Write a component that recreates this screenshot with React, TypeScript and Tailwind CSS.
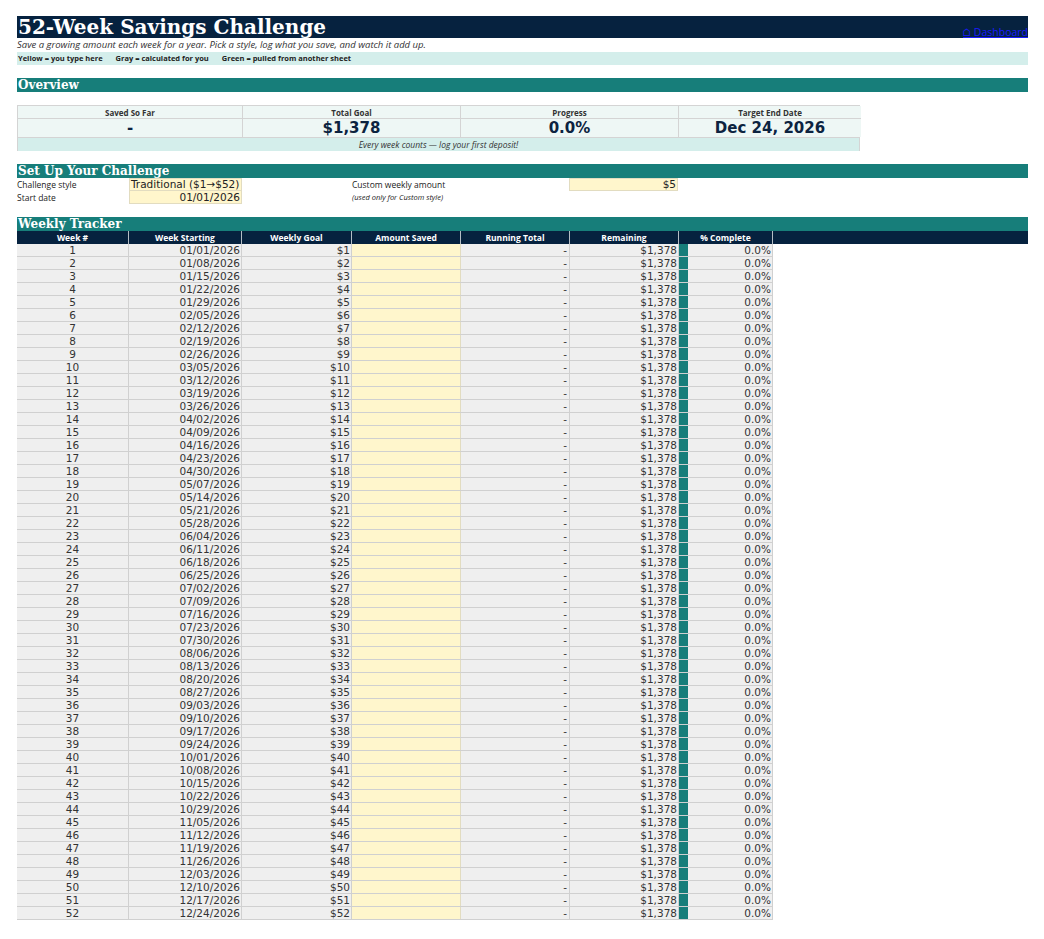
const weekStarts = (() => {
  const out: string[] = [];
  const d = new Date(2026, 0, 1);
  for (let i = 0; i < 52; i++) {
    const mm = String(d.getMonth() + 1).padStart(2, '0');
    const dd = String(d.getDate()).padStart(2, '0');
    out.push(`${mm}/${dd}/${d.getFullYear()}`);
    d.setDate(d.getDate() + 7);
  }
  return out;
})();

const dv = { fontFamily: '"DejaVu Sans", sans-serif' };
const lato = { fontFamily: '"Open Sans", Lato, sans-serif' };
const serif = { fontFamily: '"DejaVu Serif", serif' };

function SectionBar({ title }: { title: string }) {
  return (
    <div className="h-[14px] bg-[#177e7a] text-white text-[12px] font-bold leading-[14px] pl-[1px]" style={serif}>
      {title}
    </div>
  );
}

function Stat({ label, value, last }: { label: string; value: string; last?: boolean }) {
  return (
    <div className={`flex flex-col ${last ? '' : 'border-r border-[#d4d4d4]'}`}>
      <div className="h-[13px] bg-[#eef7f5] text-[8px] font-bold text-[#333] text-center leading-[13px] border-b border-[#d4d4d4]" style={lato}>
        {label}
      </div>
      <div className="h-[18px] bg-[#eef7f5] text-[15px] font-bold text-[#0c2340] text-center leading-[18px]" style={dv}>
        {value}
      </div>
    </div>
  );
}

const cols = 'grid grid-cols-[112px_113px_110px_109px_109px_109px_94px]';

export default function App() {
  return (
    <div className="w-[1044px] h-[939px] bg-white pt-4 pl-[17px] pr-4 text-[#222]">
      <div className="h-[22px] bg-[#06223f] flex items-end justify-between">
        <span className="text-white text-[20px] font-bold leading-[22px] pl-[1px]" style={serif}>52-Week Savings Challenge</span>
        <span className="text-[#1a1aff] underline text-[10.5px] leading-[12px]" style={lato}>⌂ Dashboard</span>
      </div>
      <div className="h-[14px] text-[9.5px] italic leading-[14px] text-[#333]" style={lato}>
        Save a growing amount each week for a year. Pick a style, log what you save, and watch it add up.
      </div>
      <div className="h-[13px] bg-[#d4eeeb] text-[7.5px] font-bold leading-[13px] flex gap-[13px] pl-[1px]" style={lato}>
        <span>Yellow = you type here</span>
        <span>Gray = calculated for you</span>
        <span>Green = pulled from another sheet</span>
      </div>
      <div className="h-[13px]" />
      <SectionBar title="Overview" />
      <div className="h-[13px]" />
      <div className="w-[843px] border-t border-l border-r border-[#d4d4d4]">
        <div className="grid grid-cols-[225px_218px_218px_182px] border-b border-[#d4d4d4]">
          <Stat label="Saved So Far" value="-" />
          <Stat label="Total Goal" value="$1,378" />
          <Stat label="Progress" value="0.0%" />
          <Stat label="Target End Date" value="Dec 24, 2026" last />
        </div>
        <div className="h-[13px] bg-[#d4eeeb] text-[8.5px] italic text-center leading-[13px] text-[#333]" style={lato}>
          Every week counts — log your first deposit!
        </div>
      </div>
      <div className="h-[13px]" />
      <SectionBar title="Set Up Your Challenge" />
      <div className="grid grid-cols-[112px_113px_110px_217px_109px] text-[8.5px] leading-[13px]" style={lato}>
        <div>Challenge style</div>
        <div className="bg-[#fff6cc] border border-[#e2dcc0] text-[10.5px] leading-[11px] pl-[1px]" style={dv}>Traditional ($1→$52)</div>
        <div />
        <div>Custom weekly amount</div>
        <div className="bg-[#fff6cc] border border-[#e2dcc0] text-[10.5px] leading-[11px] text-right pr-[1px]" style={dv}>$5</div>
        <div>Start date</div>
        <div className="bg-[#fff6cc] border border-[#e2dcc0] border-t-0 text-[10.5px] leading-[12px] text-right pr-[1px]" style={dv}>01/01/2026</div>
        <div />
        <div className="italic text-[7.5px]">(used only for Custom style)</div>
        <div />
      </div>
      <div className="h-[13px]" />
      <SectionBar title="Weekly Tracker" />
      <div className={`${cols} h-[13px] bg-[#06223f] text-white text-[8.5px] font-bold leading-[13px] text-center`} style={lato}>
        {['Week #', 'Week Starting', 'Weekly Goal', 'Amount Saved', 'Running Total', 'Remaining', '% Complete'].map((h) => (
          <div key={h} className="border-r border-white/70">{h}</div>
        ))}
      </div>
      {weekStarts.map((d, i) => (
        <div key={d} className={`${cols} h-[13px] text-[10.5px] leading-[12px] text-[#333] border-b border-[#d0d0d0] w-[756px]`} style={dv}>
          <div className="bg-[#efefef] border-r border-[#d0d0d0] text-center">{i + 1}</div>
          <div className="bg-[#efefef] border-r border-[#d0d0d0] text-right pr-[1px]">{d}</div>
          <div className="bg-[#efefef] border-r border-[#d0d0d0] text-right pr-[1px]">${i + 1}</div>
          <div className="bg-[#fff6cc] border-r border-[#e2dcc0]" />
          <div className="bg-[#efefef] border-r border-[#d0d0d0] text-right pr-[2px]">-</div>
          <div className="bg-[#efefef] border-r border-[#d0d0d0] text-right pr-[1px]">$1,378</div>
          <div className="bg-[#efefef] border-r border-[#d0d0d0] flex justify-between pr-[1px]">
            <span className="w-[9px] h-full bg-[#177e7a]" />
            <span>0.0%</span>
          </div>
        </div>
      ))}
    </div>
  );
}
